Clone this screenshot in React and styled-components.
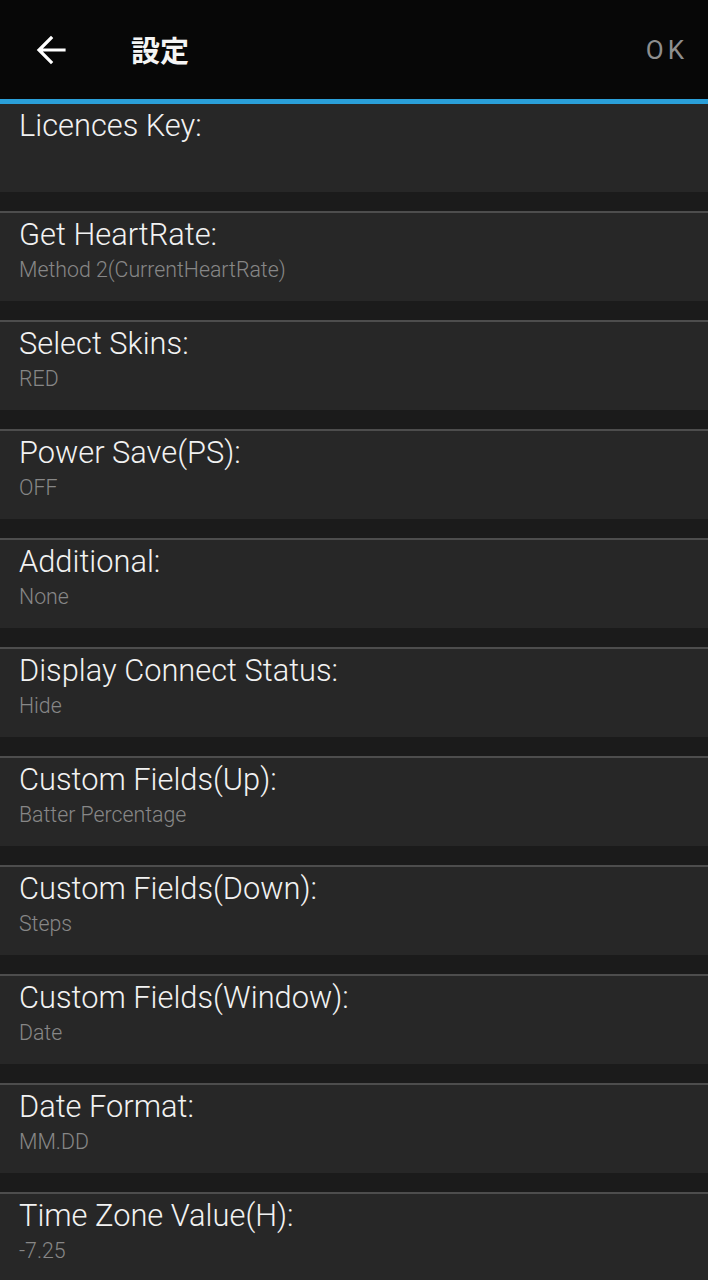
import React from "react";
import styled, { createGlobalStyle } from "styled-components";

const Global = createGlobalStyle`
  html, body { margin: 0; padding: 0; background: #1b1b1b; }
  body { font-family: Roboto, "Noto Sans", sans-serif; }
`;

const Page = styled.div`
  width: 708px;
  height: 1280px;
  overflow: hidden;
  background: #1b1b1b;
  display: flex;
  flex-direction: column;
`;

const Header = styled.header`
  height: 99px;
  background: #070707;
  display: flex;
  align-items: center;
  padding: 0 24px 0 34px;
  border-bottom: 5px solid #2a9fd8;
  flex-shrink: 0;
`;

const BackButton = styled.button`
  background: none;
  border: none;
  padding: 0;
  width: 34px;
  height: 34px;
  display: flex;
  align-items: center;
  justify-content: center;
  cursor: pointer;
`;

const Title = styled.h1`
  margin: 0 0 0 63px;
  font-family: "Noto Sans CJK JP", "Noto Sans", sans-serif;
  font-weight: 700;
  font-size: 29px;
  color: #f4f4f4;
  flex: 1;
  line-height: 1;
`;

const OkButton = styled.button`
  background: none;
  border: none;
  padding: 0;
  font-family: Roboto, sans-serif;
  font-size: 26px;
  letter-spacing: 4px;
  color: #8e8e8e;
  margin-right: -4px;
`;

const List = styled.div`
  display: flex;
  flex-direction: column;
`;

const Item = styled.div`
  display: flex;
  flex-direction: column;
  border-top: ${(p) => (p.$first ? "none" : "2px solid #4d4d4d")};
  padding-bottom: 19px;
`;

const Card = styled.div`
  height: 88px;
  background: #272727;
  padding: 0 19px;
  box-sizing: border-box;
  display: flex;
  flex-direction: column;
`;

const Label = styled.div`
  font-family: Roboto, sans-serif;
  font-weight: 300;
  font-size: 30.8px;
  color: #f2f2f2;
  line-height: 36px;
  margin-top: 4px;
`;

const Value = styled.div`
  font-family: Roboto, sans-serif;
  font-weight: 300;
  font-size: 21.3px;
  color: #878787;
  line-height: 24px;
  margin-top: 5px;
`;

const items = [
  ["Licences Key:", ""],
  ["Get HeartRate:", "Method 2(CurrentHeartRate)"],
  ["Select Skins:", "RED"],
  ["Power Save(PS):", "OFF"],
  ["Additional:", "None"],
  ["Display Connect Status:", "Hide"],
  ["Custom Fields(Up):", "Batter Percentage"],
  ["Custom Fields(Down):", "Steps"],
  ["Custom Fields(Window):", "Date"],
  ["Date Format:", "MM.DD"],
  ["Time Zone Value(H):", "-7.25"],
];

export default function App() {
  return (
    <Page>
      <Global />
      <Header>
        <BackButton aria-label="back">
          <svg width="30" height="30" viewBox="0 0 30 30" fill="none">
            <path
              d="M28 15H4M15 3L3 15l12 12"
              stroke="#ffffff"
              strokeWidth="3.2"
              strokeLinecap="square"
            />
          </svg>
        </BackButton>
        <Title>設定</Title>
        <OkButton>OK</OkButton>
      </Header>
      <List>
        {items.map(([label, value], i) => (
          <Item key={label} $first={i === 0}>
            <Card>
              <Label>{label}</Label>
              {value && <Value>{value}</Value>}
            </Card>
          </Item>
        ))}
      </List>
    </Page>
  );
}
